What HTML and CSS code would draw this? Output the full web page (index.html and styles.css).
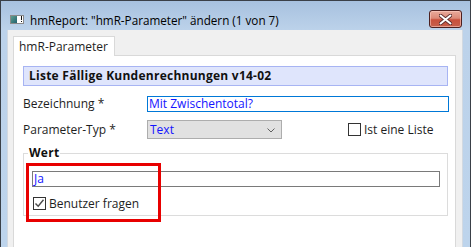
FILE: index.html
```html
<!DOCTYPE html>
<html lang="de">
<head>
<meta charset="utf-8">
<title>hmReport</title>
<link rel="stylesheet" href="styles.css">
</head>
<body>
<div class="window">
  <div class="titlebar">
    <svg class="app-icon" width="16" height="16" viewBox="0 0 16 16">
      <defs>
        <linearGradient id="ig" x1="0" y1="0" x2="1" y2="1">
          <stop offset="0" stop-color="#5fa08e"/>
          <stop offset="1" stop-color="#1f5f6f"/>
        </linearGradient>
      </defs>
      <rect x="1.5" y="4.5" width="13" height="8" fill="#ffffff" stroke="#8a8a8a"/>
      <rect x="2" y="5" width="6" height="7" fill="url(#ig)"/>
      <rect x="12" y="5" width="1" height="4" fill="#111"/>
      <rect x="12" y="10" width="1" height="1" fill="#111"/>
    </svg>
    <span class="title">hmReport: "hmR-Parameter" ändern (1 von 7)</span>
    <div class="close">
      <svg width="13" height="11" viewBox="0 0 13 11">
        <path d="M1.5 1.5 L11.5 9.5 M11.5 1.5 L1.5 9.5" stroke="#5a2a2a" stroke-width="3.6" stroke-linecap="round"/>
        <path d="M1.5 1.5 L11.5 9.5 M11.5 1.5 L1.5 9.5" stroke="#ffffff" stroke-width="2" stroke-linecap="round"/>
      </svg>
    </div>
  </div>
  <div class="client">
    <div class="tabs">
      <div class="tab">hmR-Parameter</div>
    </div>
    <div class="page">
      <div class="header">Liste Fällige Kundenrechnungen v14-02</div>
      <div class="row row-first">
        <span class="label">Bezeichnung *</span>
        <div class="textbox focused">Mit Zwischentotal?</div>
      </div>
      <div class="row row-second">
        <span class="label">Parameter-Typ *</span>
        <div class="select">
          <span>Text</span>
          <svg class="chevron" width="8" height="5" viewBox="0 0 8 5">
            <path d="M0.5 0.5 L4 4 L7.5 0.5" fill="none" stroke="#606060" stroke-width="1"/>
          </svg>
        </div>
        <div class="check list-check">
          <span class="box"></span>
          <span>Ist eine Liste</span>
        </div>
      </div>
      <fieldset class="group">
        <legend>Wert</legend>
        <div class="textbox plain">Ja</div>
        <div class="check ask-check">
          <span class="box">
            <svg width="11" height="11" viewBox="0 0 11 11">
              <path d="M1.5 5.5 L4.2 8.3 L9.5 1.8" fill="none" stroke="#4a4a4a" stroke-width="1.4"/>
            </svg>
          </span>
          <span>Benutzer fragen</span>
        </div>
      </fieldset>
    </div>
  </div>
</div>
<div class="highlight"></div>
</body>
</html>
```
FILE: styles.css
```css
html, body {
  margin: 0;
  padding: 0;
}
body {
  width: 471px;
  height: 247px;
  overflow: hidden;
  position: relative;
  font-family: "Open Sans", "Liberation Sans", sans-serif;
  font-size: 12px;
  color: #1e1e1e;
  background: #bfd5ec;
}
.window {
  box-sizing: border-box;
  height: 247px;
  border: 1px solid #3a4048;
  border-bottom: 0;
  padding: 0 7px 0 6px;
  background: linear-gradient(to bottom, #a7c1df 0, #bcd2ea 29px, #bdd4ec 100%);
  display: flex;
  flex-direction: column;
}
.titlebar {
  height: 29px;
  display: flex;
  align-items: flex-start;
  flex-shrink: 0;
}
.app-icon {
  margin: 10px 0 0 2px;
  flex-shrink: 0;
}
.title {
  margin: 10px 0 0 5px;
  font-size: 11.7px;
  line-height: 18px;
  color: #000;
  white-space: nowrap;
}
.close {
  margin: 9px 1px 0 auto;
  box-sizing: border-box;
  width: 33px;
  height: 18px;
  border: 1px solid #4c2020;
  border-radius: 3px;
  background: linear-gradient(to bottom, #e9aa9b 0, #dc8a78 45%, #c9503c 55%, #c6604c 100%);
  box-shadow: inset 0 0 0 1px rgba(255, 210, 200, 0.55);
  display: flex;
  align-items: center;
  justify-content: center;
}
.client {
  flex: 1;
  display: flex;
  flex-direction: column;
  background: #f0f0f0;
  border-left: 1px solid #d2d9e1;
  border-right: 1px solid #d2d9e1;
  padding: 6px 6px 0 5px;
}
.tabs {
  display: flex;
  height: 19px;
}
.tab {
  box-sizing: border-box;
  width: 102px;
  height: 20px;
  border: 1px solid #d9d9d9;
  border-bottom: 0;
  background: #fff;
  padding-left: 5px;
  line-height: 19px;
  position: relative;
  z-index: 1;
}
.page {
  flex: 1;
  background: #fff;
  border: 1px solid #d9d9d9;
  border-bottom: 0;
  padding: 10px 7px 0 9px;
}
.header {
  box-sizing: border-box;
  height: 20px;
  border: 1px solid #a7b4f3;
  background: #dfe5fc;
  padding-left: 5px;
  font-weight: bold;
  letter-spacing: 0.25px;
  line-height: 18px;
  color: #111;
}
.row {
  display: flex;
  align-items: center;
}
.row-first {
  margin-top: 9px;
}
.row-second {
  margin-top: 8px;
}
.label {
  width: 124px;
  flex-shrink: 0;
  white-space: nowrap;
}
.textbox {
  box-sizing: border-box;
  height: 16px;
  line-height: 14px;
  padding-left: 1px;
  color: #1414ff;
  background: #fff;
}
.focused {
  flex: 1;
  margin-right: -1px;
  border: 1px solid #0078d7;
}
.plain {
  margin-top: 10px;
  border: 1px solid #7a7a7a;
}
.select {
  box-sizing: border-box;
  width: 135px;
  height: 19px;
  border: 1px solid #adadad;
  background: #e1e1e1;
  padding: 0 6px 0 2px;
  display: flex;
  align-items: center;
  justify-content: space-between;
  color: #1414ff;
}
.chevron {
  margin-top: 1px;
}
.check {
  display: flex;
  align-items: center;
  line-height: 13px;
  white-space: nowrap;
}
.box {
  box-sizing: border-box;
  width: 13px;
  height: 13px;
  border: 1px solid #333;
  background: #fff;
  margin-right: 3px;
  display: flex;
  align-items: center;
  justify-content: center;
  flex-shrink: 0;
}
.list-check {
  margin-left: 66px;
}
.group {
  margin: 6px 0 0 0;
  border: 1px solid #dcdcdc;
  padding: 0 7px 5px 8px;
  min-inline-size: 0;
}
.group legend {
  font-weight: bold;
  letter-spacing: 0.25px;
  line-height: 16px;
  padding: 0 1px;
  margin-left: -4px;
  color: #111;
}
.ask-check {
  margin: 10px 0 0 1px;
}
.highlight {
  position: absolute;
  left: 26px;
  top: 163px;
  width: 135px;
  height: 59px;
  box-sizing: border-box;
  border: 3px solid #e80000;
}
```
